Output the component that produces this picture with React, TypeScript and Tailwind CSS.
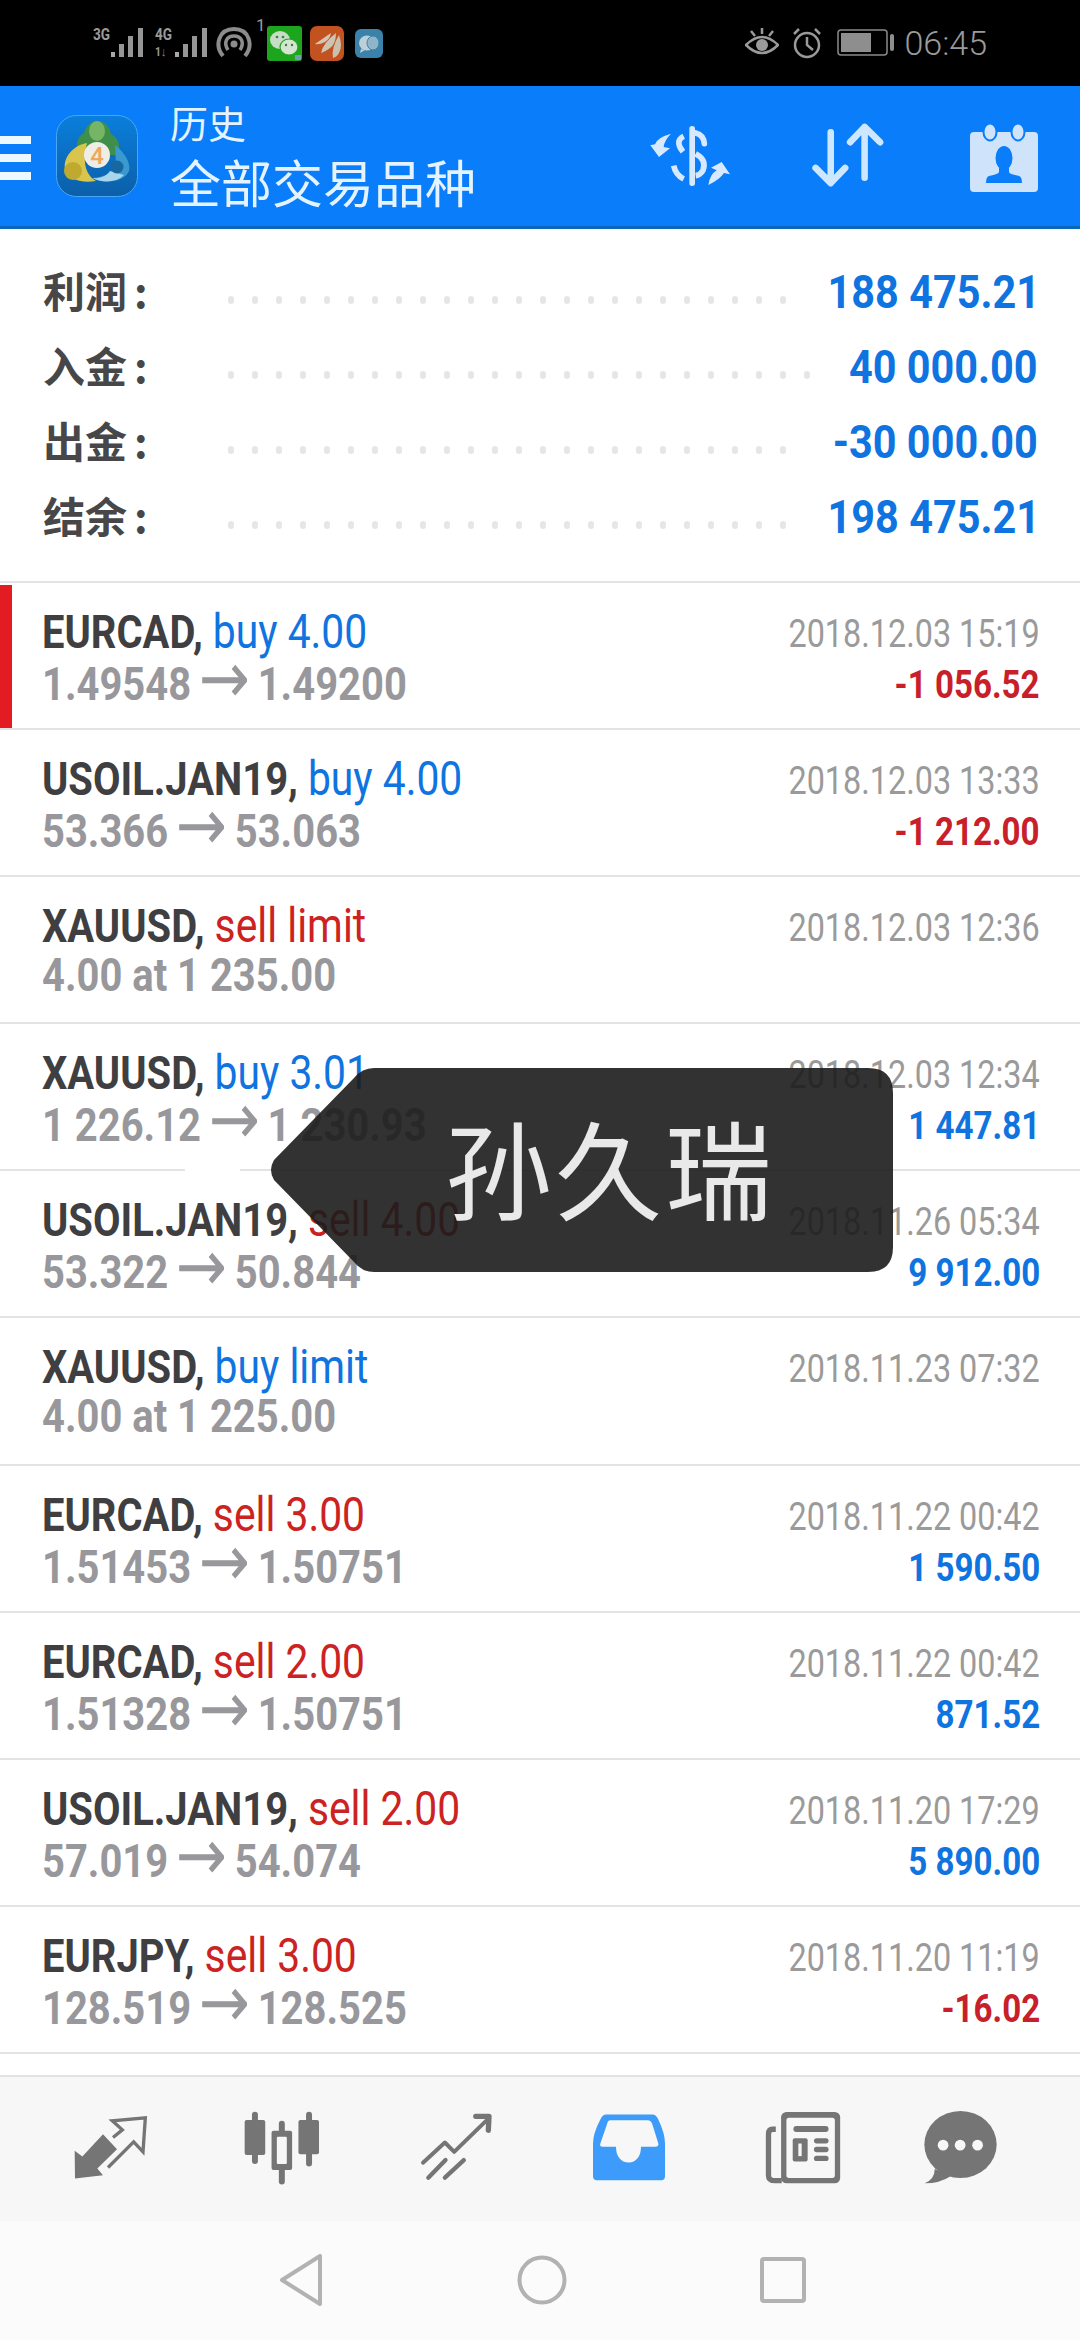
import React from "react";

type Row = { sym: string; side: string; sideColor: "buy" | "sell"; price: string; date: string; profit?: string; loss?: boolean };

const rows: Row[] = [
  { sym: "EURCAD,", side: "buy 4.00", sideColor: "buy", price: "1.49548 → 1.49200", date: "2018.12.03 15:19", profit: "-1 056.52", loss: true },
  { sym: "USOIL.JAN19,", side: "buy 4.00", sideColor: "buy", price: "53.366 → 53.063", date: "2018.12.03 13:33", profit: "-1 212.00", loss: true },
  { sym: "XAUUSD,", side: "sell limit", sideColor: "sell", price: "4.00 at 1 235.00", date: "2018.12.03 12:36" },
  { sym: "XAUUSD,", side: "buy 3.01", sideColor: "buy", price: "1 226.12 → 1 230.93", date: "2018.12.03 12:34", profit: "1 447.81" },
  { sym: "USOIL.JAN19,", side: "sell 4.00", sideColor: "sell", price: "53.322 → 50.844", date: "2018.11.26 05:34", profit: "9 912.00" },
  { sym: "XAUUSD,", side: "buy limit", sideColor: "buy", price: "4.00 at 1 225.00", date: "2018.11.23 07:32" },
  { sym: "EURCAD,", side: "sell 3.00", sideColor: "sell", price: "1.51453 → 1.50751", date: "2018.11.22 00:42", profit: "1 590.50" },
  { sym: "EURCAD,", side: "sell 2.00", sideColor: "sell", price: "1.51328 → 1.50751", date: "2018.11.22 00:42", profit: "871.52" },
  { sym: "USOIL.JAN19,", side: "sell 2.00", sideColor: "sell", price: "57.019 → 54.074", date: "2018.11.20 17:29", profit: "5 890.00" },
  { sym: "EURJPY,", side: "sell 3.00", sideColor: "sell", price: "128.519 → 128.525", date: "2018.11.20 11:19", profit: "-16.02", loss: true },
];

const summary = [
  { label: "利润", value: "188 475.21", dots: 24, pr: "pr-[46px]" },
  { label: "入金", value: "40 000.00", dots: 25, pr: "pr-[42px]" },
  { label: "出金", value: "-30 000.00", dots: 24, pr: "pr-[42px]" },
  { label: "结余", value: "198 475.21", dots: 24, pr: "pr-[46px]" },
];

function Bars({ className }: { className?: string }) {
  return (
    <svg width="33" height="31" viewBox="0 0 33 31" className={className}>
      <rect x="0" y="25" width="4" height="5" fill="#a8a8a8" />
      <rect x="8" y="17" width="5" height="13" fill="#969696" />
      <rect x="17" y="9" width="5" height="21" fill="#969696" />
      <rect x="27" y="1" width="5" height="29" fill="#969696" />
    </svg>
  );
}

function StatusBar() {
  return (
    <div className="h-[86px] bg-black flex items-start pl-[93px] pr-[93px] shrink-0 text-[#9a9a9a] [font-family:Roboto,sans-serif]">
      <div className="flex items-start mt-[27px]">
        <div className="w-[18px] text-[17px] leading-[15px] font-bold scale-x-[0.8] origin-left">3G</div>
        <Bars />
        <div className="ml-[11px] w-[20px] flex flex-col text-[17px] leading-[15px] font-bold">
          <span className="scale-x-[0.8] origin-left">4G</span>
          <span className="scale-x-[0.8] origin-left text-[13px] leading-[14px] mt-[3px]">1↓</span>
        </div>
        <Bars />
        <svg width="36" height="31" viewBox="0 0 36 31" className="ml-[8px]" fill="none" stroke="#8c8c8c">
          <path d="M7 29 C-2 18 3 2 18 2 C33 2 38 18 29 29" strokeWidth="4" />
          <path d="M12 23 C7 15 11 9 18 9 C25 9 29 15 24 23" strokeWidth="3.5" />
          <circle cx="18" cy="17" r="3.5" fill="#8c8c8c" stroke="none" />
        </svg>
        <span className="text-[17px] leading-[15px] -mt-[9px] ml-[4px] w-[12px]">1</span>
      </div>
      <svg width="35" height="35" viewBox="0 0 35 35" className="mt-[26px] -ml-[1px]">
        <rect width="35" height="35" rx="3" fill="#1ea51e" />
        <ellipse cx="13" cy="14" rx="10" ry="9" fill="#c9dcc6" />
        <ellipse cx="22" cy="21" rx="9" ry="8" fill="#d6e4d2" stroke="#1ea51e" strokeWidth="1.2" />
        <circle cx="10" cy="11" r="1.3" fill="#3d7d3d" />
        <circle cx="16" cy="11" r="1.3" fill="#3d7d3d" />
        <circle cx="19" cy="19" r="1.2" fill="#3d7d3d" />
        <circle cx="25" cy="19" r="1.2" fill="#3d7d3d" />
        <rect x="28" y="29" width="6" height="5" fill="#6f9fb0" />
      </svg>
      <svg width="34" height="35" viewBox="0 0 34 35" className="mt-[26px] ml-[8px]">
        <rect width="34" height="35" rx="7" fill="#c2521f" />
        <path d="M5 18 L21 7 Q20 13 15 16 Q9 19 5 18Z" fill="#d5c6b4" />
        <path d="M11 27 Q13 17 26 7 Q26 18 20 22 Q15 26 11 27Z" fill="#cfc3b2" />
        <path d="M23 32 Q21 22 29 9 Q33 20 29 27 Q27 31 23 32Z" fill="#cbbfae" />
      </svg>
      <svg width="28" height="29" viewBox="0 0 28 29" className="mt-[29px] ml-[11px]">
        <rect width="28" height="29" rx="6" fill="#3a82aa" />
        <ellipse cx="12" cy="14" rx="8" ry="7.5" fill="#bcd0da" />
        <ellipse cx="18" cy="14" rx="6" ry="7" fill="#8fb5c8" stroke="#3a82aa" />
        <path d="M6 20 L5 24 L10 21Z" fill="#bcd0da" />
      </svg>
      <div className="ml-auto flex items-start">
        <svg width="34" height="30" viewBox="0 0 34 30" className="mt-[28px]" fill="none" stroke="#9a9a9a" strokeWidth="2.5">
          <path d="M1 17 Q17 1 33 17 Q17 33 1 17Z" />
          <circle cx="17" cy="17" r="6" fill="#9a9a9a" stroke="none" />
          <path d="M17 0 V6 M6 3 L10 8 M28 3 L24 8" />
        </svg>
        <svg width="30" height="32" viewBox="0 0 30 32" className="mt-[27px] ml-[13px]" fill="none" stroke="#9a9a9a" strokeWidth="2.5">
          <circle cx="15" cy="18" r="12" />
          <path d="M15 10 V18 L21 23 M2 7 L7 2 M28 7 L23 2" />
        </svg>
        <svg width="58" height="27" viewBox="0 0 58 27" className="mt-[29px] ml-[15px]">
          <rect x="1" y="1" width="49" height="25" rx="3" fill="none" stroke="#8a8a8a" strokeWidth="1.5" />
          <rect x="4" y="4" width="30" height="19" fill="#8e8e8e" />
          <rect x="53" y="5" width="4" height="17" rx="2" fill="#8e8e8e" />
        </svg>
        <span className="ml-[9px] text-[34px] leading-[30px] mt-[28px] font-light">06:45</span>
      </div>
    </div>
  );
}

function Logo() {
  return (
    <svg width="82" height="82" viewBox="0 0 82 82" className="ml-[25px] shrink-0">
      <defs>
        <linearGradient id="lg" x1="0" y1="0" x2="0" y2="1">
          <stop offset="0" stopColor="#0a7fdc" />
          <stop offset="1" stopColor="#0c5fa8" />
        </linearGradient>
      </defs>
      <rect x="0.5" y="0.5" width="81" height="81" rx="20" fill="url(#lg)" stroke="#4aa6f5" />
      <path d="M41 6 C50 6 54 13 55 19 C63 23 65 32 62 40 L22 40 C19 31 21 22 28 18 C30 11 35 6 41 6Z" fill="#3f8f4a" />
      <ellipse cx="41" cy="16" rx="8" ry="10" fill="#76b565" />
      <path d="M31 28 C18 30 7 42 9 54 C11 63 24 69 40 66 C30 60 26 48 31 28Z" fill="#d9c54c" />
      <circle cx="17" cy="56" r="9" fill="#bfa92f" />
      <path d="M59 30 C69 38 75 48 73 56 C69 66 50 70 36 63 C48 62 58 58 60 50Z" fill="#3a9ad0" />
      <path d="M54 56 C50 62 42 64 36 63 C46 68 60 68 68 60Z" fill="#a8d6ea" />
      <circle cx="61" cy="52" r="6.5" fill="#17689f" />
      <circle cx="41" cy="40" r="13" fill="#f0ece6" />
      <text x="41" y="49" textAnchor="middle" fontFamily="Roboto, sans-serif" fontSize="24" fontWeight="500" fill="#eba95a">4</text>
    </svg>
  );
}

function Header() {
  return (
    <div className="h-[143px] shrink-0 bg-[#097dfa] border-b-[3px] border-[#0a68bb] flex items-center text-[#e4f3ff] [font-family:'Noto_Sans_CJK_SC',sans-serif]">
      <div className="flex flex-col gap-[10px] w-[31px] shrink-0 mt-[3px]">
        <div className="h-[8px] bg-[#eef8ff]" />
        <div className="h-[8px] bg-[#eef8ff]" />
        <div className="h-[8px] bg-[#eef8ff]" />
      </div>
      <Logo />
      <div className="ml-[32px] flex flex-col">
        <span className="text-[38px] leading-[44px]">历史</span>
        <span className="text-[51px] leading-[62px] mt-[6px]">全部交易品种</span>
      </div>
      <div className="ml-auto flex items-center pr-[42px]">
        <svg width="80" height="60" viewBox="35 45 240 180" className="mr-[81px]" fill="#d6e9ff">
          <rect x="153" y="45" width="17" height="180" rx="8" />
          <g fill="none" stroke="#d6e9ff" strokeWidth="17">
            <path d="M172 66 Q196 72 198 98" strokeLinecap="round" />
            <path d="M136 76 Q108 90 134 122" />
            <path d="M172 128 Q206 146 194 178 Q186 192 172 194" />
            <path d="M106 164 Q112 192 136 204" />
          </g>
          <path d="M98 68 Q55 80 50 100 L36 103 L62 138 L95 112 L76 108 Q78 88 98 68Z" />
          <path d="M210 222 Q215 190 235 178 L218 170 L250 153 L275 190 L257 186 Q245 205 210 222Z" />
        </svg>
        <svg width="74" height="66" viewBox="780 372 225 200" preserveAspectRatio="none" className="mr-[85px]" fill="none" stroke="#cde7ff" strokeWidth="20" strokeLinecap="round" strokeLinejoin="round">
          <path d="M840 400 V552 M794 508 L840 554 L884 508" />
          <path d="M943 538 V384 M899 430 L943 384 L990 430" />
        </svg>
        <svg width="68" height="70" viewBox="0 0 68 70" className="mt-[2px]">
          <rect y="10" width="68" height="60" rx="4" fill="#cfe4fb" />
          <ellipse cx="20" cy="10" rx="6.5" ry="8.5" fill="#cfe4fb" stroke="#097dfa" strokeWidth="2" />
          <ellipse cx="48" cy="10" rx="6.5" ry="8.5" fill="#cfe4fb" stroke="#097dfa" strokeWidth="2" />
          <ellipse cx="34" cy="36" rx="8.5" ry="12" fill="#097dfa" />
          <path d="M29 44 H39 V50 Q39 52 49 54 Q52 55 52 61 H16 Q16 55 19 54 Q29 52 29 50Z" fill="#097dfa" />
        </svg>
      </div>
    </div>
  );
}

function Summary() {
  return (
    <div className="h-[352px] shrink-0 pt-[26px] [font-family:Roboto,'Noto_Sans_CJK_SC',sans-serif]">
      {summary.map((s) => (
        <div key={s.label} className={`h-[75px] flex items-center pl-[43px] ${s.pr}`}>
          <div className="w-[185px] shrink-0 text-[42px] leading-[75px] -mt-[7px] font-bold text-[#474749] [font-family:'Noto_Sans_CJK_SC',sans-serif]">
            {s.label}<span className="ml-[7px]">:</span>
          </div>
          <div className="flex mt-[15px]">
            {Array.from({ length: s.dots }).map((_, i) => (
              <span key={i} className="w-[6px] h-[8px] mr-[18px] rounded-full bg-[#e6e6e6]" />
            ))}
          </div>
          <div className="ml-auto text-[46px] leading-[75px] -mt-[1px] font-bold text-[#0f74e0] whitespace-nowrap scale-x-[0.9] origin-right">
            {s.value}
          </div>
        </div>
      ))}
    </div>
  );
}

function Price({ text }: { text: string }) {
  const parts = text.split(" → ");
  if (parts.length === 1) return <>{text}</>;
  return (
    <>
      {parts[0]}
      <span className="inline-block mx-[9px] text-[72px] leading-[40px] translate-y-[3px] font-normal [font-family:'DejaVu_Sans',sans-serif]">→</span>
      {parts[1]}
    </>
  );
}

function TradeRow({ r, i }: { r: Row; i: number }) {
  return (
    <div className="relative h-[147.1px] border-t-2 border-[#e3e3e3] flex justify-between pt-[23px] pl-[42px] pr-[40px] [font-family:Roboto,sans-serif] box-border">
      {i === 0 && <div className="absolute left-0 top-[2px] bottom-0 w-[12px] bg-[#e31b23]" />}
      {i === 4 && <div className="absolute left-[185px] -top-[2px] w-[55px] h-[2px] bg-white" />}
      <div className="flex flex-col">
        <div className="text-[47px] leading-[51px] h-[51px] whitespace-nowrap scale-x-[0.85] origin-left">
          <span className="font-bold text-[#3f3f42]">{r.sym}</span>{" "}
          <span className={`text-[48px] ${r.sideColor === "buy" ? "text-[#0f74e0]" : "text-[#cc2222]"}`}>{r.side}</span>
        </div>
        <div className="text-[47px] leading-[51px] h-[51px] -mt-[2px] font-bold text-[#98989c] whitespace-nowrap scale-x-[0.85] origin-left">
          <Price text={r.price} />
        </div>
      </div>
      <div className="flex flex-col items-end pt-[3px]">
        <div className="text-[39px] leading-[51px] text-[#9a9a9a] whitespace-nowrap scale-x-[0.83] origin-right">{r.date}</div>
        {r.profit && (
          <div className={`text-[39px] leading-[51px] font-bold whitespace-nowrap scale-x-[0.85] origin-right ${r.loss ? "text-[#c8202a]" : "text-[#0f74e0]"}`}>
            {r.profit}
          </div>
        )}
      </div>
    </div>
  );
}

function Toast() {
  return (
    <div className="absolute left-[270px] top-[1068px] w-[623px] h-[204px] flex items-center justify-center pl-[57px] pb-[8px]">
      <svg width="623" height="204" viewBox="0 0 623 204" className="absolute inset-0">
        <path
          d="M104 0 H598 Q623 0 623 25 V179 Q623 204 598 204 H104 Q92 204 84 194 L4 112 Q-2 102 4 92 L84 10 Q92 0 104 0Z"
          fill="#1c1c1c"
          fillOpacity="0.9"
        />
      </svg>
      <span className="relative text-[107px] leading-[120px] tracking-[3px] text-[#e9e9e9] [font-family:'Noto_Sans_CJK_SC',sans-serif]">孙久瑞</span>
    </div>
  );
}

function TabBar() {
  return (
    <div className="h-[146px] shrink-0 bg-[#f7f7f7] border-t-2 border-[#e3e3e3] flex items-center pb-[3px]">
      <svg width="75" height="67" viewBox="40 45 225 200" className="ml-[73px]" fill="#757575">
        <path d="M130 105 L172 150 L113 208 L130 228 L46 238 L45 155 L68 172Z" />
        <path d="M160 115 L188 92 L158 65 L257 56 L250 158 L222 128 L145 205" fill="none" stroke="#757575" strokeWidth="10" />
      </svg>
      <svg width="78" height="75" viewBox="550 30 235 225" className="ml-[95px]" fill="#757575">
        <rect x="577" y="35" width="18" height="157" rx="9" />
        <rect x="555" y="60" width="62" height="105" rx="6" />
        <rect x="658" y="62" width="18" height="192" rx="9" />
        <rect x="636" y="92" width="62" height="118" rx="6" />
        <rect x="652" y="110" width="30" height="82" rx="3" fill="#f7f7f7" />
        <rect x="740" y="35" width="18" height="165" rx="9" />
        <rect x="717" y="60" width="62" height="103" rx="6" />
      </svg>
      <svg width="73" height="68" viewBox="1075 38 220 205" className="ml-[99px]" fill="none" stroke="#757575" strokeLinecap="round" strokeLinejoin="round">
        <path d="M1084 188 L1150 127 L1178 155 L1278 58" strokeWidth="12" />
        <path d="M1243 48 L1283 48 L1281 90" strokeWidth="16" />
        <path d="M1100 233 L1152 180 M1150 233 L1207 180" strokeWidth="13" />
      </svg>
      <svg width="72" height="67" viewBox="36 42 216 200" className="ml-[100px]">
        <path d="M75 43 H215 Q225 43 232 58 Q252 100 252 130 V228 Q252 240 240 240 H48 Q36 240 36 228 V130 Q36 100 58 58 Q65 43 75 43Z" fill="#3d9bfb" />
        <path d="M88 60 H200 Q210 60 214 72 L232 130 Q234 140 222 140 H180 C180 170 165 187 143 187 C120 187 105 170 105 140 H65 Q55 140 58 130 L78 72 Q80 60 88 60Z" fill="#f7f7f7" />
      </svg>
      <svg width="76" height="73" viewBox="550 30 228 220" className="ml-[100px]" fill="#757575">
        <rect x="598" y="33" width="178" height="215" rx="16" />
        <rect x="614" y="50" width="146" height="182" rx="8" fill="#f7f7f7" />
        <path d="M582 85 H572 Q560 85 560 100 V225 Q560 240 580 240 H600" fill="none" stroke="#757575" strokeWidth="16" />
        <rect x="635" y="75" width="106" height="18" rx="9" />
        <rect x="697" y="112" width="44" height="16" rx="8" />
        <rect x="697" y="138" width="44" height="16" rx="8" />
        <rect x="697" y="165" width="44" height="16" rx="8" />
        <rect x="633" y="112" width="45" height="70" rx="6" />
        <rect x="650" y="128" width="10" height="38" fill="#f7f7f7" />
      </svg>
      <svg width="73" height="73" viewBox="1028 32 218 218" className="ml-[83px]" fill="#757575">
        <ellipse cx="1137" cy="132" rx="108" ry="100" />
        <path d="M1060 205 Q1060 235 1030 248 Q1075 248 1110 225Z" />
        <circle cx="1085" cy="134" r="16" fill="#f7f7f7" />
        <circle cx="1136" cy="134" r="16" fill="#f7f7f7" />
        <circle cx="1188" cy="134" r="16" fill="#f7f7f7" />
      </svg>
    </div>
  );
}

function NavBar() {
  return (
    <div className="flex-1 bg-[#fbfbfb] flex items-center">
      <svg width="44" height="52" viewBox="0 0 44 52" className="ml-[279px]" fill="none" stroke="#b2b2b2" strokeWidth="4" strokeLinejoin="round">
        <path d="M41 2 V50 L3 26Z" />
      </svg>
      <svg width="50" height="50" viewBox="0 0 50 50" className="ml-[194px]" fill="none" stroke="#b2b2b2" strokeWidth="4">
        <circle cx="25" cy="25" r="22.5" />
      </svg>
      <svg width="46" height="46" viewBox="0 0 46 46" className="ml-[193px]" fill="none" stroke="#b2b2b2" strokeWidth="4">
        <rect x="2" y="2" width="42" height="42" rx="2" />
      </svg>
    </div>
  );
}

export default function App() {
  return (
    <div className="relative w-[1080px] h-[2340px] overflow-hidden bg-white flex flex-col">
      <StatusBar />
      <Header />
      <Summary />
      <div className="shrink-0">
        {rows.map((r, i) => (
          <TradeRow key={i} r={r} i={i} />
        ))}
      </div>
      <div className="h-[23px] shrink-0 border-t-2 border-[#e3e3e3]" />
      <TabBar />
      <NavBar />
      <Toast />
    </div>
  );
}
